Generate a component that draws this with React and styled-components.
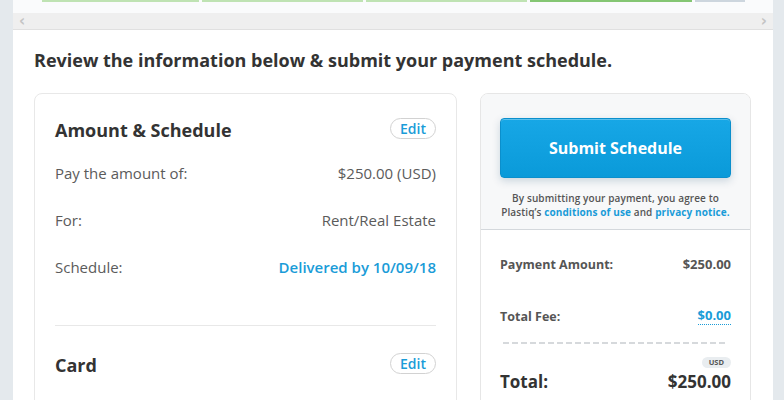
import React from 'react';
import styled, { createGlobalStyle } from 'styled-components';

const GlobalStyle = createGlobalStyle`
  html, body {
    margin: 0;
    padding: 0;
    background: #e4e9ed;
    font-family: 'Open Sans', 'Liberation Sans', sans-serif;
    color: #333;
  }
`;

const steps = [
  { width: 157, done: true },
  { width: 161, done: true },
  { width: 161, done: true },
  { width: 162, active: true },
  { width: 50 },
];

const amountRows = [
  { label: 'Pay the amount of:', value: '$250.00 (USD)' },
  { label: 'For:', value: 'Rent/Real Estate' },
  { label: 'Schedule:', value: 'Delivered by 10/09/18', link: true },
];

const App = () => {
  return (
    <>
      <GlobalStyle />
      <Page>
        <Panel>
          <Steps>
            {steps.map((s, i) => (
              <Step key={i} done={s.done} active={s.active} style={{ width: s.width }} />
            ))}
          </Steps>
          <Scroller>
            <Arrow>‹</Arrow>
            <Arrow>›</Arrow>
          </Scroller>
          <Content>
            <Heading>Review the information below &amp; submit your payment schedule.</Heading>
            <Columns>
              <DetailsCard>
                <Section>
                  <SectionHead>
                    <SectionTitle>Amount &amp; Schedule</SectionTitle>
                    <EditButton>Edit</EditButton>
                  </SectionHead>
                  <Rows>
                    {amountRows.map(r => (
                      <Row key={r.label}>
                        <Label>{r.label}</Label>
                        <Value link={r.link}>{r.value}</Value>
                      </Row>
                    ))}
                  </Rows>
                </Section>
                <Section>
                  <SectionHead>
                    <SectionTitle>Card</SectionTitle>
                    <EditButton>Edit</EditButton>
                  </SectionHead>
                </Section>
              </DetailsCard>

              <SummaryCard>
                <SubmitArea>
                  <SubmitButton>Submit Schedule</SubmitButton>
                  <Terms>
                    By submitting your payment, you agree to
                    <br />
                    Plastiq’s <TermsLink>conditions of use</TermsLink> and{' '}
                    <TermsLink>privacy notice.</TermsLink>
                  </Terms>
                </SubmitArea>
                <Totals>
                  <TotalRow>
                    <span>Payment Amount:</span>
                    <span>$250.00</span>
                  </TotalRow>
                  <TotalRow fee>
                    <span>Total Fee:</span>
                    <FeeValue>$0.00</FeeValue>
                  </TotalRow>
                  <Dashes />
                  <Currency>
                    <CurrencyBadge>USD</CurrencyBadge>
                  </Currency>
                  <GrandTotal>
                    <span>Total:</span>
                    <span>$250.00</span>
                  </GrandTotal>
                </Totals>
              </SummaryCard>
            </Columns>
          </Content>
        </Panel>
      </Page>
    </>
  );
};

const Page = styled.div`
  height: 400px;
  overflow: hidden;
  padding-left: 13px;
`;

const Panel = styled.div`
  width: 760px;
  min-height: 400px;
  background: #fff;
`;

const Steps = styled.div`
  height: 13px;
  background: #fafbfc;
  display: flex;
  gap: 3px;
  padding-left: 29px;
`;

const Step = styled.div`
  height: 2px;
  background: ${props =>
    props.active ? '#84c673' : props.done ? '#bfe3b3' : '#cdd6de'};
`;

const Scroller = styled.div`
  height: 16px;
  background: #efefef;
  border-bottom: 1px solid #e0e0e0;
  display: flex;
  justify-content: space-between;
  align-items: center;
  padding: 0 6px 0 6px;
`;

const Arrow = styled.span`
  font-family: 'DejaVu Sans', sans-serif;
  font-size: 15px;
  line-height: 16px;
  color: #c4c4c4;
  font-weight: bold;
`;

const Content = styled.div`
  padding: 19px 22px 0 21px;
`;

const Heading = styled.h1`
  margin: 0 0 22px;
  font-size: 18px;
  line-height: 22px;
  font-weight: 700;
  color: #333;
`;

const Columns = styled.div`
  display: grid;
  grid-template-columns: 423px 271px;
  gap: 23px;
  align-items: start;
`;

const DetailsCard = styled.div`
  border: 1px solid #e8e8e8;
  border-radius: 8px;
  padding: 0 20px;
  height: 400px;
`;

const Section = styled.div`
  padding: 25px 0 35px;
  border-bottom: 1px solid #e8e8e8;

  & + & {
    padding-top: 28px;
  }

  &:last-child {
    border-bottom: none;
  }
`;

const SectionHead = styled.div`
  display: flex;
  justify-content: space-between;
  align-items: center;
  height: 22px;
`;

const SectionTitle = styled.h2`
  margin: 0;
  font-size: 18px;
  font-weight: 700;
  color: #333;
`;

const EditButton = styled.button`
  font-family: inherit;
  height: 21px;
  width: 46px;
  padding: 0;
  border: 1px solid #d2d2d2;
  border-radius: 11px;
  background: #fff;
  color: #1a9cd8;
  font-size: 14px;
  font-weight: 600;
  line-height: 19px;
  margin-top: -3px;
`;

const Rows = styled.div`
  margin-top: 8px;
`;

const Row = styled.div`
  height: 47px;
  display: flex;
  justify-content: space-between;
  align-items: center;
  font-size: 15px;
`;

const Label = styled.span`
  color: #5b5b5b;
`;

const Value = styled.span`
  color: ${props => (props.link ? '#1a9cd8' : '#5b5b5b')};
  font-weight: ${props => (props.link ? 600 : 400)};
`;

const SummaryCard = styled.div`
  border: 1px solid #e6e6e6;
  border-radius: 8px;
  overflow: hidden;
  height: 400px;
  background: #fff;
`;

const SubmitArea = styled.div`
  background: #f7f8f9;
  border-bottom: 1px solid #d4d8dc;
  padding: 24px 19px 10px;
`;

const SubmitButton = styled.button`
  display: block;
  width: 100%;
  height: 60px;
  font-family: inherit;
  font-size: 16px;
  font-weight: 700;
  color: #fff;
  border: 1px solid #0b8fcc;
  border-radius: 4px;
  background: linear-gradient(#17a7e6, #0a9ad9);
  box-shadow: inset 0 1px 0 rgba(255, 255, 255, 0.3), 0 3px 8px rgba(0, 60, 100, 0.18);
`;

const Terms = styled.p`
  margin: 13px 0 0;
  text-align: center;
  font-size: 10px;
  line-height: 14px;
  font-weight: 600;
  letter-spacing: 0.1px;
  color: #555;
`;

const TermsLink = styled.span`
  color: #1a9cd8;
  font-weight: 700;
`;

const Totals = styled.div`
  padding: 24px 19px 0;
`;

const TotalRow = styled.div`
  display: flex;
  justify-content: space-between;
  align-items: center;
  height: 20px;
  font-size: 12.5px;
  font-weight: 700;
  color: #555;
  margin-bottom: ${props => (props.fee ? '16px' : '32px')};

  & > span:last-child {
    font-size: 13px;
  }
`;

const FeeValue = styled.span`
  color: #1a9cd8;
  border-bottom: 1px dotted #1a9cd8;
  line-height: 17px;
`;

const Dashes = styled.div`
  height: 2px;
  margin: 0 3px;
  background: repeating-linear-gradient(to right, #d6d9dc 0 6px, transparent 6px 9px);
`;

const Currency = styled.div`
  display: flex;
  justify-content: flex-end;
  margin-top: 13px;
`;

const CurrencyBadge = styled.span`
  background: #e9edf0;
  color: #555;
  font-size: 7.5px;
  font-weight: 700;
  line-height: 11px;
  padding: 0 7px;
  border-radius: 6px;
`;

const GrandTotal = styled.div`
  display: flex;
  justify-content: space-between;
  align-items: center;
  height: 24px;
  margin-top: 1px;
  font-size: 17px;
  font-weight: 700;
  color: #333;
`;

export default App;
